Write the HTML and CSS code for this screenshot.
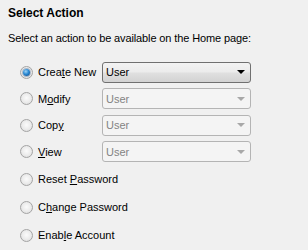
FILE: index.html
```html
<!DOCTYPE html>
<html lang="en">
<head>
    <meta charset="UTF-8">
    <title>Select Action</title>
    <link rel="stylesheet" href="styles.css">
</head>
<body>
    <div class="panel">
        <h1 class="title">Select Action</h1>
        <p class="intro">Select an action to be available on the Home page:</p>

        <div class="options">
            <div class="row combo-row">
                <label class="option"><span class="radio checked"></span><span>Crea<u>t</u>e New</span></label>
                <div class="combo">
                    <span class="combo-text">User</span>
                    <span class="arrow"></span>
                </div>
            </div>
            <div class="row combo-row">
                <label class="option"><span class="radio"></span><span>M<u>o</u>dify</span></label>
                <div class="combo disabled">
                    <span class="combo-text">User</span>
                    <span class="arrow"></span>
                </div>
            </div>
            <div class="row combo-row">
                <label class="option"><span class="radio"></span><span>Cop<u>y</u></span></label>
                <div class="combo disabled">
                    <span class="combo-text">User</span>
                    <span class="arrow"></span>
                </div>
            </div>
            <div class="row combo-row">
                <label class="option"><span class="radio"></span><span><u>V</u>iew</span></label>
                <div class="combo disabled">
                    <span class="combo-text">User</span>
                    <span class="arrow"></span>
                </div>
            </div>
            <div class="row">
                <label class="option"><span class="radio"></span><span>Reset <u>P</u>assword</span></label>
            </div>
            <div class="row">
                <label class="option"><span class="radio"></span><span>C<u>h</u>ange Password</span></label>
            </div>
            <div class="row">
                <label class="option"><span class="radio"></span><span>Enab<u>l</u>e Account</span></label>
            </div>
        </div>
    </div>
</body>
</html>
```

FILE: styles.css
```css
* {
    margin: 0;
    padding: 0;
    box-sizing: border-box;
}

body {
    background-color: #f0f0f0;
    color: #000;
    font-family: "Liberation Sans", Arial, sans-serif;
    font-size: 11px;
}

.panel {
    padding: 6px 0 0 8px;
}

.title {
    font-size: 12px;
    font-weight: bold;
    line-height: 14px;
}

.intro {
    margin-top: 11px;
    line-height: 14px;
    letter-spacing: -0.12px;
}

.options {
    margin-top: 14px;
    padding-left: 12px;
}

.row {
    display: flex;
    align-items: center;
    height: 28px;
}

.combo-row {
    height: 26.5px;
}

.option {
    display: flex;
    align-items: center;
    gap: 5px;
    white-space: nowrap;
}

.combo-row .option {
    width: 82px;
    flex-shrink: 0;
}

.option u {
    text-underline-offset: 1px;
}

.radio {
    width: 13px;
    height: 13px;
    border-radius: 50%;
    border: 1px solid #a4a4a4;
    background: radial-gradient(circle at 50% 45%, #fbfbfb 0%, #ececec 50%, #d8d8d8 100%);
    position: relative;
    flex-shrink: 0;
}

.radio.checked::after {
    content: "";
    position: absolute;
    left: 2px;
    top: 2px;
    width: 7px;
    height: 7px;
    border-radius: 50%;
    background: radial-gradient(circle at 40% 35%, #9fd3f5 0%, #2a8ad4 45%, #0d3e7a 100%);
    box-shadow: 0 0 0 1px rgba(40, 80, 130, 0.35);
}

.combo {
    width: 149px;
    height: 21px;
    border: 1px solid #707070;
    border-radius: 3px;
    background: linear-gradient(to bottom, #f3f3f3 0%, #ececec 45%, #dfdfdf 55%, #d2d2d2 100%);
    display: flex;
    align-items: center;
    justify-content: space-between;
    padding: 0 4px 0 3px;
}

.combo-text {
    line-height: 14px;
}

.arrow {
    width: 0;
    height: 0;
    border-left: 4px solid transparent;
    border-right: 4px solid transparent;
    border-top: 4px solid #000;
    margin-right: 1px;
}

.combo.disabled {
    border-color: #b4b4b4;
    background: #f4f4f4;
}

.combo.disabled .combo-text {
    color: #838383;
}

.combo.disabled .arrow {
    border-top-color: #a8a8a8;
}
```
